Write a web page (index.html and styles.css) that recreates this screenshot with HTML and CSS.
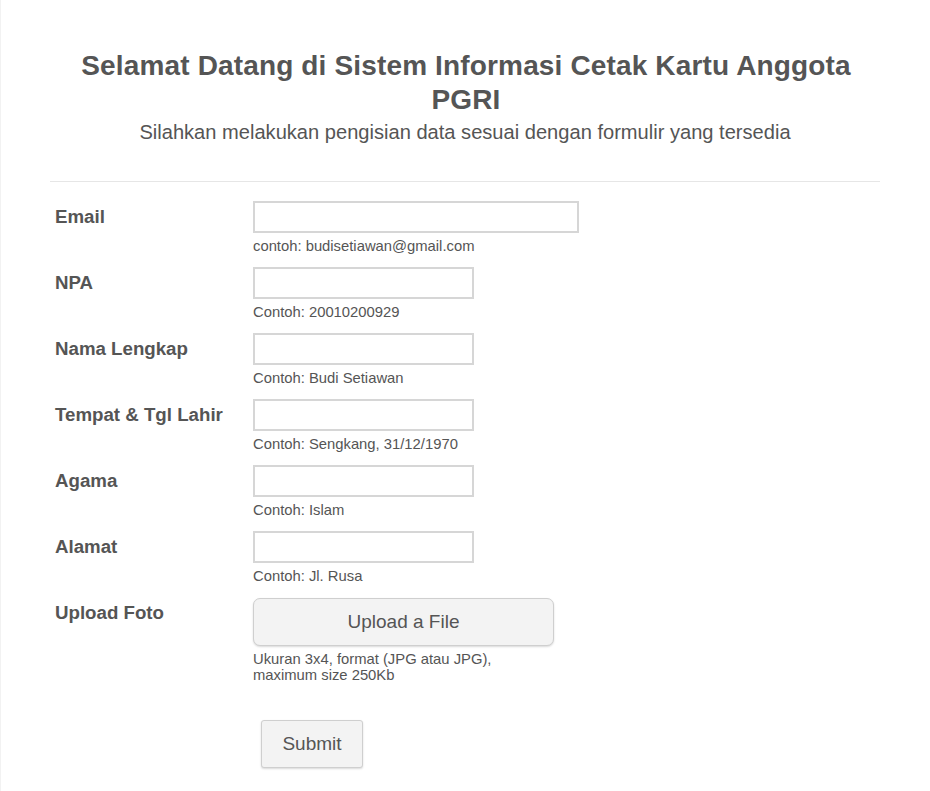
FILE: index.html
```html
<!DOCTYPE html>
<html lang="id">
<head>
<meta charset="utf-8">
<title>Cetak Kartu Anggota PGRI</title>
<link rel="stylesheet" href="styles.css">
</head>
<body>
<div class="page">
  <div class="container">
    <header class="header">
      <h1 class="title">Selamat Datang di Sistem Informasi Cetak Kartu Anggota PGRI</h1>
      <p class="subtitle">Silahkan melakukan pengisian data sesuai dengan formulir yang tersedia</p>
    </header>
    <form class="form">
      <div class="row">
        <label class="label" for="email">Email</label>
        <div class="field">
          <input class="input input-wide" id="email" type="text">
          <div class="hint">contoh: budisetiawan@gmail.com</div>
        </div>
      </div>
      <div class="row">
        <label class="label" for="npa">NPA</label>
        <div class="field">
          <input class="input" id="npa" type="text">
          <div class="hint">Contoh: 20010200929</div>
        </div>
      </div>
      <div class="row">
        <label class="label" for="nama">Nama Lengkap</label>
        <div class="field">
          <input class="input" id="nama" type="text">
          <div class="hint">Contoh: Budi Setiawan</div>
        </div>
      </div>
      <div class="row">
        <label class="label" for="ttl">Tempat &amp; Tgl Lahir</label>
        <div class="field">
          <input class="input" id="ttl" type="text">
          <div class="hint">Contoh: Sengkang, 31/12/1970</div>
        </div>
      </div>
      <div class="row">
        <label class="label" for="agama">Agama</label>
        <div class="field">
          <input class="input" id="agama" type="text">
          <div class="hint">Contoh: Islam</div>
        </div>
      </div>
      <div class="row">
        <label class="label" for="alamat">Alamat</label>
        <div class="field">
          <input class="input" id="alamat" type="text">
          <div class="hint">Contoh: Jl. Rusa</div>
        </div>
      </div>
      <div class="row">
        <span class="label">Upload Foto</span>
        <div class="field">
          <button class="upload" type="button">Upload a File</button>
          <div class="hint hint-multi">Ukuran 3x4, format (JPG atau JPG),<br>maximum size 250Kb</div>
        </div>
      </div>
      <div class="submit-row">
        <button class="submit" type="button">Submit</button>
      </div>
    </form>
  </div>
</div>
</body>
</html>
```

FILE: styles.css
```css
html, body {
  margin: 0;
  padding: 0;
  background: #fff;
}

body {
  font-family: "Liberation Sans", Arial, sans-serif;
  color: #555;
}

.page {
  min-height: 791px;
  border-left: 1px solid #f2f2f2;
  box-sizing: border-box;
}

.container {
  width: 830px;
  margin-left: 49px;
  padding-top: 49px;
}

.header {
  text-align: center;
  padding-bottom: 37px;
  border-bottom: 1px solid #e6e6e6;
}

.title {
  margin: 0;
  font-size: 28px;
  line-height: 34px;
  letter-spacing: 0.15px;
  font-weight: bold;
  color: #555;
  padding: 0 20px 0 22px;
}

.subtitle {
  margin: 3px 0 0;
  font-size: 20.1px;
  line-height: 24px;
  color: #555;
}

.form {
  padding-top: 19px;
}

.row {
  display: grid;
  grid-template-columns: 198px 1fr;
  padding-left: 5px;
  margin-bottom: 12px;
}

.label {
  font-size: 18.7px;
  line-height: 22px;
  font-weight: bold;
  color: #555;
  padding-top: 5px;
}

.field {
  display: flex;
  flex-direction: column;
  align-items: flex-start;
}

.input {
  box-sizing: border-box;
  width: 221px;
  height: 32px;
  border: 2px solid #d6d6d6;
  border-radius: 0;
  background: #fff;
  margin: 0;
  padding: 4px 6px;
}

.input-wide {
  width: 326px;
}

.hint {
  margin-top: 5px;
  font-size: 14.8px;
  line-height: 17px;
  color: #555;
}

.hint-multi {
  margin-top: 5px;
  line-height: 16px;
}

.upload {
  box-sizing: border-box;
  width: 301px;
  height: 48px;
  border: 1px solid #cfcfcf;
  border-radius: 7px;
  background: #f3f3f3;
  box-shadow: 0 1px 2px rgba(0, 0, 0, 0.15);
  font-family: "Liberation Sans", Arial, sans-serif;
  font-size: 19px;
  color: #555;
  margin: 1px 0 0;
}

.submit-row {
  padding-left: 211px;
  padding-top: 25px;
}

.submit {
  box-sizing: border-box;
  width: 102px;
  height: 48px;
  border: 1px solid #cfcfcf;
  border-radius: 3px;
  background: #f3f3f3;
  box-shadow: 0 1px 2px rgba(0, 0, 0, 0.15);
  font-family: "Liberation Sans", Arial, sans-serif;
  font-size: 19px;
  color: #555;
  margin: 0;
}
```
